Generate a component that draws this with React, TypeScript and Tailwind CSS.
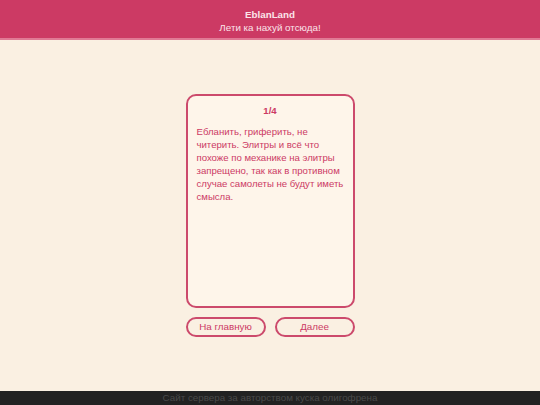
import React from "react";

const App: React.FC = () => {
  return (
    <div
      className="flex h-[405px] w-[540px] flex-col bg-[#faf0e2] text-[#cc3a64]"
      style={{ fontFamily: '"Liberation Sans", Arial, sans-serif' }}
    >
      <header className="flex h-[40px] flex-col items-center justify-center border-b-2 border-[#e07a95] bg-[#cc3a64] pt-[3px] text-[#fbe4ea]">
        <div className="text-[9.8px] font-bold leading-[13px]">EblanLand</div>
        <div className="text-[9.8px] leading-[13px]">Лети ка нахуй отсюда!</div>
      </header>
      <main className="flex flex-1 flex-col items-center justify-center">
        <div className="flex h-[214px] w-[169px] flex-col rounded-[10px] border-2 border-[#cc4a6c] bg-[#fef5ea] px-[9px] pt-[8px]">
          <div className="text-center text-[9.6px] font-bold leading-[13px]">1/4</div>
          <p className="mt-[8px] text-[9.6px] leading-[13px] text-[#cc3a64]">
            Ебланить, гриферить, не читерить. Элитры и всё что похоже по механике на элитры запрещено, так как в противном случае самолеты не будут иметь смысла.
          </p>
        </div>
        <div className="mt-[9px] flex w-[169px] justify-between">
          <button className="h-[20px] w-[80px] rounded-full border-2 border-[#cc4a6c] text-[9.8px] leading-none text-[#cc3a64]">
            На главную
          </button>
          <button className="h-[20px] w-[80px] rounded-full border-2 border-[#cc4a6c] text-[9.8px] leading-none text-[#cc3a64]">
            Далее
          </button>
        </div>
      </main>
      <footer className="flex h-[14px] items-center justify-center bg-[#222222] text-[9.8px] text-[#4a4a4a]">
        Сайт сервера за авторством куска олигофрена
      </footer>
    </div>
  );
};

export default App;
